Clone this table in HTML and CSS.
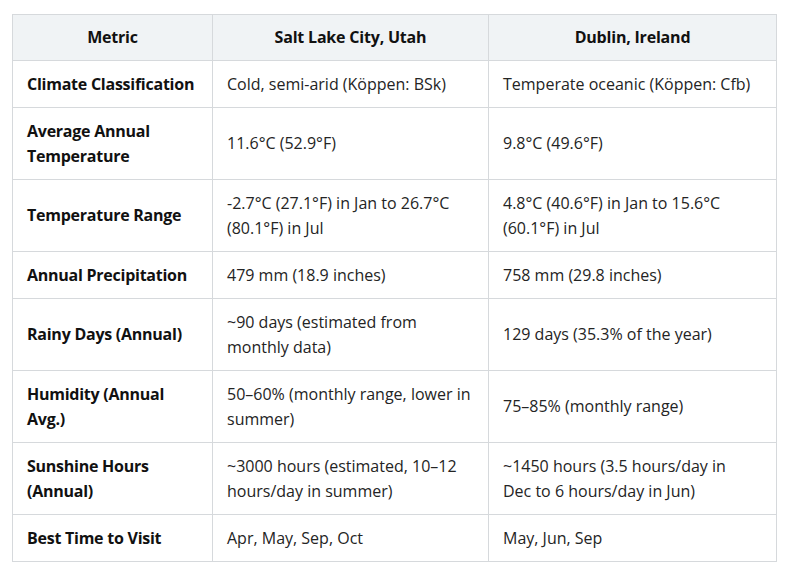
FILE: index.html
```html
<!DOCTYPE html>
<html>
<head>
<meta charset="utf-8">
<link rel="stylesheet" href="styles.css">
</head>
<body>
<div class="wrap">
<table class="climate">
<colgroup><col class="c1"><col class="c2"><col class="c3"></colgroup>
<thead>
<tr><th>Metric</th><th>Salt Lake City, Utah</th><th>Dublin, Ireland</th></tr>
</thead>
<tbody>
<tr><td class="metric">Climate Classification</td><td>Cold, semi-arid (Köppen: BSk)</td><td>Temperate oceanic (Köppen: Cfb)</td></tr>
<tr><td class="metric">Average Annual Temperature</td><td>11.6°C (52.9°F)</td><td>9.8°C (49.6°F)</td></tr>
<tr><td class="metric">Temperature Range</td><td>-2.7°C (27.1°F) in Jan to 26.7°C (80.1°F) in Jul</td><td>4.8°C (40.6°F) in Jan to 15.6°C (60.1°F) in Jul</td></tr>
<tr><td class="metric">Annual Precipitation</td><td>479 mm (18.9 inches)</td><td>758 mm (29.8 inches)</td></tr>
<tr><td class="metric">Rainy Days (Annual)</td><td>~90 days (estimated from monthly data)</td><td>129 days (35.3% of the year)</td></tr>
<tr><td class="metric">Humidity (Annual Avg.)</td><td>50–60% (monthly range, lower in summer)</td><td>75–85% (monthly range)</td></tr>
<tr><td class="metric">Sunshine Hours (Annual)</td><td>~3000 hours (estimated, 10–12 hours/day in summer)</td><td>~1450 hours (3.5 hours/day in<br>Dec to 6 hours/day in Jun)</td></tr>
<tr><td class="metric">Best Time to Visit</td><td>Apr, May, Sep, Oct</td><td>May, Jun, Sep</td></tr>
</tbody>
</table>
</div>
</body>
</html>
```
FILE: styles.css
```css
html, body { margin: 0; padding: 0; background: #ffffff; }
.wrap { padding: 14px 0 0 12px; }
.climate {
  border-collapse: collapse;
  table-layout: fixed;
  width: 764px;
  font-family: "Open Sans", "Noto Sans", sans-serif;
  font-size: 16px;
  line-height: 25px;
  color: #242424;
}
.c1 { width: 200px; }
.c2 { width: 276px; }
.c3 { width: 288px; }
.climate th, .climate td {
  border: 1px solid #d6d9dc;
  padding: 10.5px 14px 10.5px 14px;
  text-align: left;
  vertical-align: middle;
}
.climate th {
  background: #f0f3f5;
  text-align: center;
  font-weight: 700;
  color: #111;
  padding-top: 10px;
  padding-bottom: 10px;
  letter-spacing: -0.2px;
}
.climate td.metric {
  font-weight: 700;
  color: #111;
  letter-spacing: -0.25px;
  padding-right: 8px;
}
```
